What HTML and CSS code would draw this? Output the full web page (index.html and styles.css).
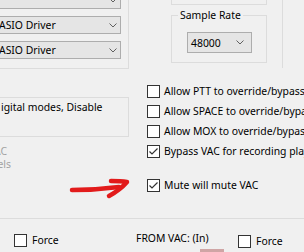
FILE: index.html
```html
<!DOCTYPE html>
<html lang="en">
<head>
    <meta charset="UTF-8">
    <title>VAC Setup</title>
    <link rel="stylesheet" href="styles.css">
</head>
<body>

<div class="form">
    <div class="top">
        <div class="grp grp-devices">
            <div class="combo">
                <span class="combo-text"></span>
                <svg class="chev" width="8" height="5" viewBox="0 0 8 5"><path d="M0.5 0.5 L4 4 L7.5 0.5" /></svg>
            </div>
            <div class="combo">
                <span class="combo-text">ASIO Driver</span>
                <svg class="chev" width="8" height="5" viewBox="0 0 8 5"><path d="M0.5 0.5 L4 4 L7.5 0.5" /></svg>
            </div>
            <div class="combo">
                <span class="combo-text">ASIO Driver</span>
                <svg class="chev" width="8" height="5" viewBox="0 0 8 5"><path d="M0.5 0.5 L4 4 L7.5 0.5" /></svg>
            </div>
        </div>

        <div class="rate-col">
            <div class="grp grp-upper"></div>
            <fieldset class="grp grp-rate">
                <legend>Sample Rate</legend>
                <div class="combo combo-rate">
                    <span class="combo-text">48000</span>
                    <svg class="chev" width="8" height="5" viewBox="0 0 8 5"><path d="M0.5 0.5 L4 4 L7.5 0.5" /></svg>
                </div>
            </fieldset>
        </div>

        <div class="side-line"></div>
    </div>

    <div class="mid">
        <div class="left-col">
            <div class="grp grp-note">igital modes, Disable</div>
            <div class="muted">
                <span class="muted-line muted-short">VAC</span>
                <span class="muted-line">Levels</span>
            </div>
        </div>

        <div class="checks">
            <label class="check"><span class="box"></span>Allow PTT to override/bypass VAC for Phone modes</label>
            <label class="check"><span class="box"></span>Allow SPACE to override/bypass VAC for Phone modes</label>
            <label class="check"><span class="box"></span>Allow MOX to override/bypass VAC for Phone modes</label>
            <label class="check"><span class="box"><svg width="11" height="11" viewBox="0 0 11 11"><path d="M1.5 5.5 L4 8 L9.5 2.5" /></svg></span>Bypass VAC for recording playback</label>
            <label class="check check-mute"><span class="box"><svg width="11" height="11" viewBox="0 0 11 11"><path d="M1.5 5.5 L4 8 L9.5 2.5" /></svg></span>Mute will mute VAC</label>
        </div>
    </div>

    <div class="bottom">
        <label class="check"><span class="box"></span>Force</label>
        <div class="from-col">
            <div class="from-label">FROM VAC: (In)</div>
            <div class="level-btn"></div>
        </div>
        <label class="check check-low"><span class="box"></span>Force</label>
    </div>

    <!-- red marker arrow drawn over the form -->
    <svg class="arrow" width="304" height="252" viewBox="0 0 304 252">
        <path d="M72 190 Q96 190 119 187" />
        <path d="M111 181 Q121 181 127 182 Q120 190 109 196" />
    </svg>
</div>

</body>
</html>
```

FILE: styles.css
```css
* { box-sizing: border-box; }
body { margin: 0; width: 304px; height: 252px; overflow: hidden; background: #f0f0f0; font-family: "Noto Sans", "Segoe UI", sans-serif; font-size: 10.4px; line-height: 14px; color: #000; }
.form { position: relative; width: 304px; height: 252px; }

/* Group boxes */
.grp { border: 1px solid #dcdcdc; }

/* Top row */
.top { display: flex; align-items: flex-start; height: 70px; }
.grp-devices { flex-shrink: 0; margin: -30px 0 0 -20px; width: 149px; height: 99px; padding: 20px 7px 0 14px; display: flex; flex-direction: column; gap: 7px; }

.combo { display: flex; align-items: center; height: 18px; padding: 0 3px 0 3px; background: #e5e5e5; border: 1px solid #adadad; white-space: nowrap; }
.combo-text { flex: 1; }
.chev { flex-shrink: 0; }
.chev path { fill: none; stroke: #606060; stroke-width: 1; }

.rate-col { flex-shrink: 0; margin-left: 42px; width: 96px; display: flex; flex-direction: column; }
.grp-upper { margin-top: -20px; height: 25px; }
.grp-rate { margin: 3px 0 0; padding: 0 6px 9px; min-width: 0; }
.grp-rate legend { padding: 0 2px; line-height: 14px; }
.combo-rate { width: 65px; height: 21px; margin: 10px 0 0 9px; padding: 0 7px 0 3px; }

.side-line { flex-shrink: 0; margin-left: 15px; width: 1px; height: 68px; background: #dcdcdc; }

/* Middle */
.mid { display: flex; height: 148px; }
.left-col { flex-shrink: 0; width: 129px; }
.grp-note { margin: 27px 0 0 -20px; width: 149px; height: 40px; padding: 2px 0 0 20px; white-space: nowrap; }
.muted { margin: 8px 0 0 -50px; width: 61px; text-align: right; line-height: 13px; color: #a2a2a2; }
.muted-line { display: block; }
.muted-short { padding-right: 4px; }

.checks { margin: 11px 0 0 18px; display: flex; flex-direction: column; }
.check { display: flex; align-items: center; gap: 4px; height: 20px; white-space: nowrap; }
.check-mute { margin-top: 14px; }
.box { flex-shrink: 0; display: flex; align-items: center; justify-content: center; width: 13px; height: 13px; background: #fff; border: 1px solid #333; }
.box path { fill: none; stroke: #333; stroke-width: 1.2; }

/* Bottom row */
.bottom { display: grid; grid-template-columns: 122px 102px 1fr; align-items: start; height: 34px; padding: 14px 0 0 14px; border-top: 1px solid #dcdcdc; }
.bottom .check { gap: 5px; height: 14px; }
.from-label { margin-top: -2px; white-space: nowrap; }
.level-btn { margin: 4px 0 0 64px; width: 24px; height: 6px; background: #cfa5a5; }
.check-low { margin-top: 1px; }

/* Annotation */
.arrow { position: absolute; left: 0; top: 0; pointer-events: none; }
.arrow path { fill: none; stroke: #e21b1b; stroke-width: 4.5; stroke-linecap: round; stroke-linejoin: round; }
```
